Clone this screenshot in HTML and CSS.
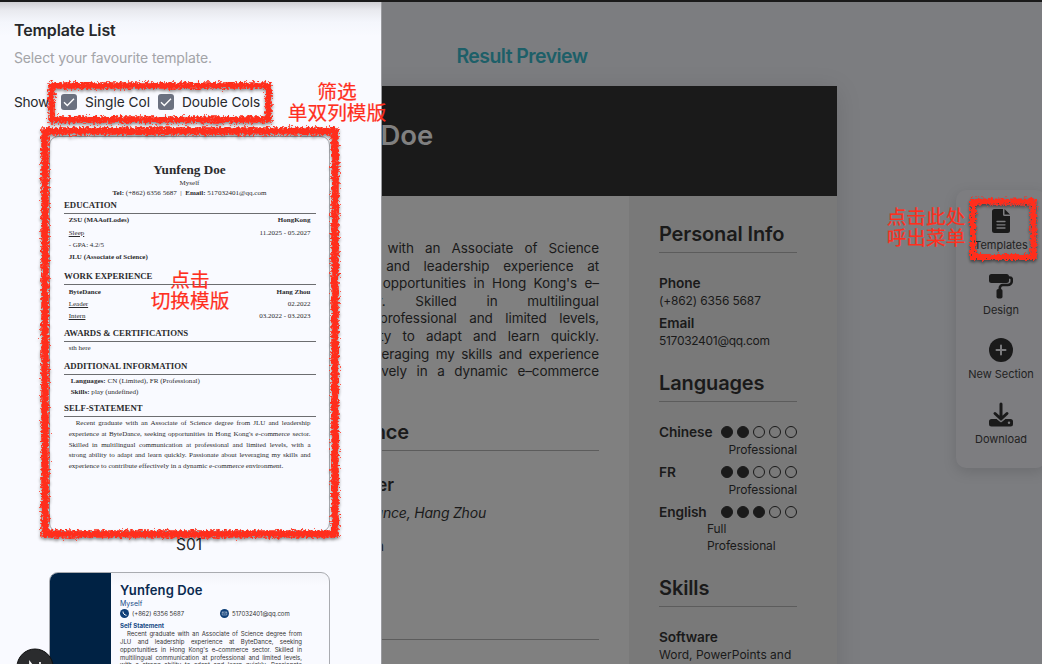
FILE: index.html
```html
<!DOCTYPE html>
<html lang="en">
<head>
<meta charset="utf-8">
<title>Resume Builder</title>
<link rel="stylesheet" href="styles.css">
</head>
<body>
<div class="app">
  <div class="workspace">
    <h1 class="preview-title">Result Preview</h1>
    <div class="sheet">
      <div class="sheet-head">Yunfeng Doe</div>
      <div class="sheet-body">
        <div class="main-col">
          <div class="para">
            <div class="indent">Recent graduate with an Associate of Science</div>
            <div>degree from JLU and leadership experience at</div>
            <div>ByteDance, seeking opportunities in Hong Kong's e–</div>
            <div>commerce sector. Skilled in multilingual</div>
            <div>communication at professional and limited levels,</div>
            <div>with a strong ability to adapt and learn quickly.</div>
            <div>Passionate about leveraging my skills and experience</div>
            <div>to contribute effectively in a dynamic e–commerce</div>
            <div class="last">environment.</div>
          </div>
          <h2 class="exp"><span>Work Experience</span></h2>
          <h3><span>Leader</span></h3>
          <p class="place"><span>ByteDance, Hang Zhou</span></p>
          <p class="role"><span>Intern</span></p>
          <h2 class="edu">Education</h2>
        </div>
        <div class="side-col">
          <h2>Personal Info</h2>
          <div class="item"><b>Phone</b><p class="v-phone">(+862) 6356 5687</p></div>
          <div class="item"><b>Email</b><p class="v-mail">517032401@qq.com</p></div>
          <h2>Languages</h2>
          <div class="item"><div class="lang"><b>Chinese</b><span class="dots"><i class="on"></i><i class="on"></i><i></i><i></i><i></i></span></div><p class="level">Professional</p></div>
          <div class="item"><div class="lang"><b>FR</b><span class="dots"><i class="on"></i><i class="on"></i><i></i><i></i><i></i></span></div><p class="level">Professional</p></div>
          <div class="item"><div class="lang"><b>English</b><span class="dots"><i class="on"></i><i class="on"></i><i class="on"></i><i></i><i></i></span></div><p class="level full">Full<br>Professional</p></div>
          <h2 class="skills">Skills</h2>
          <div class="item"><b>Software</b><p>Word, PowerPoints and</p></div>
        </div>
      </div>
    </div>
  </div>

  <nav class="tools">
    <div class="tool">
      <svg width="24" height="26" viewBox="0 0 24 26"><path fill="#1a1a1a" d="M5.500 1H14v5.500A1.500 1.500 0 0 0 15.500 8H21v14.500a2.500 2.500 0 0 1-2.500 2.500h-13A2.500 2.500 0 0 1 3 22.500v-19A2.500 2.500 0 0 1 5.500 1zM15.500 1 21 6.500h-5.500z"/><path stroke="#7b7b7d" stroke-width="1.300" stroke-linecap="round" d="M8 13.500h8M8 16.800h8M8 20h8"/></svg>
      <span>Templates</span>
    </div>
    <div class="tool">
      <svg width="24" height="26" viewBox="0 0 24 26"><rect x="0" y="1" width="20" height="9" rx="2.500" fill="#1a1a1a"/><path fill="none" stroke="#1a1a1a" stroke-width="2.600" d="M20 4.500h.8a2 2 0 0 1 2 2V8a4 4 0 0 1-4 4h-5a3 3 0 0 0-3 3v2"/><rect x="7.500" y="16" width="6" height="9.500" rx="1.800" fill="#1a1a1a"/></svg>
      <span>Design</span>
    </div>
    <div class="tool">
      <svg width="24" height="26" viewBox="0 0 24 26"><circle cx="12" cy="13" r="12" fill="#1a1a1a"/><path stroke="#7b7b7d" stroke-width="2" stroke-linecap="round" d="M12 8.500v9M7.500 13h9"/></svg>
      <span>New Section</span>
    </div>
    <div class="tool">
      <svg width="24" height="26" viewBox="0 0 24 26"><path fill="#1a1a1a" d="M2.500 17h5.700L12 20.500 15.800 17h5.700a2.500 2.500 0 0 1 2.500 2.500V22a2.500 2.500 0 0 1-2.500 2.500h-19A2.500 2.500 0 0 1 0 22v-2.500A2.500 2.500 0 0 1 2.500 17z"/><path fill="none" stroke="#7b7b7d" stroke-width="5" stroke-linecap="round" stroke-linejoin="round" d="M8.500 14.500 12 17.200l3.500-2.700"/><path fill="none" stroke="#1a1a1a" stroke-width="3" stroke-linecap="round" stroke-linejoin="round" d="M12 2v15M6 11.500l6 5.500 6-5.500"/><circle cx="20" cy="20.700" r="1.200" fill="#7b7b7d"/></svg>
      <span>Download</span>
    </div>
  </nav>

  <aside class="drawer">
    <h2 class="d-title">Template List</h2>
    <p class="d-sub">Select your favourite template.</p>
    <div class="filters">
      <span class="f-show">Show</span>
      <span class="check"><svg width="16" height="16" viewBox="0 0 16 16"><path d="M3 8.300 6.300 11.500 13 4.800" fill="none" stroke="#fff" stroke-width="1.300"/></svg></span>
      <span class="f-single">Single Col</span>
      <span class="check"><svg width="16" height="16" viewBox="0 0 16 16"><path d="M3 8.300 6.300 11.500 13 4.800" fill="none" stroke="#fff" stroke-width="1.300"/></svg></span>
      <span class="f-double">Double Cols</span>
    </div>
    <div class="card one">
      <div class="c-name">Yunfeng Doe</div>
      <div class="c-role">Myself</div>
      <div class="c-contact"><b>Tel:</b> (+862) 6356 5687 &nbsp;|&nbsp; <b>Email:</b> 517032401@qq.com</div>
      <h4 class="first">EDUCATION</h4>
      <div class="row"><b>ZSU (MAAofLodes)</b><b>HongKong</b></div>
      <div class="row"><u>Sleep</u><span>11.2025 - 05.2027</span></div>
      <div class="row"><span>- GPA: 4.2/5</span></div>
      <div class="row"><b>JLU (Associate of Science)</b></div>
      <h4>WORK EXPERIENCE</h4>
      <div class="row"><b>ByteDance</b><b>Hang Zhou</b></div>
      <div class="row"><u>Leader</u><span>02.2022</span></div>
      <div class="row"><u>Intern</u><span>03.2022 - 03.2023</span></div>
      <h4 class="awards">AWARDS &amp; CERTIFICATIONS</h4>
      <div class="row"><span>sth here</span></div>
      <h4 class="addl">ADDITIONAL INFORMATION</h4>
      <div class="tight"><b>Languages:</b> CN (Limited), FR (Professional)</div>
      <div class="tight"><b>Skills:</b> play (undefined)</div>
      <h4 class="self">SELF-STATEMENT</h4>
      <div class="stmt">
        <div class="ind">Recent graduate with an Associate of Science degree from JLU and leadership</div>
        <div>experience at ByteDance, seeking opportunities in Hong Kong's e-commerce sector.</div>
        <div>Skilled in multilingual communication at professional and limited levels, with a</div>
        <div>strong ability to adapt and learn quickly. Passionate about leveraging my skills and</div>
        <div class="last">experience to contribute effectively in a dynamic e-commerce environment.</div>
      </div>
    </div>
    <div class="c-label">S01</div>
    <div class="card two">
      <div class="navy"></div>
      <div class="two-body">
        <div class="t-name">Yunfeng Doe</div>
        <div class="t-role">Myself</div>
        <div class="t-contact">
          <svg width="9" height="9" viewBox="0 0 9 9"><circle cx="4.500" cy="4.500" r="4.500" fill="#0f3f78"/><path d="M3 2.500c0 2 1.500 3.700 3.500 3.800" fill="none" stroke="#fff" stroke-width="1"/></svg>
          <span class="t-tel">(+862) 6356 5687</span>
          <svg width="9" height="9" viewBox="0 0 9 9"><circle cx="4.500" cy="4.500" r="4.500" fill="#0f3f78"/><path d="M2.200 3h4.600v3H2.200zl2.300 1.800L6.800 3" fill="none" stroke="#b9c8dc" stroke-width=".6"/></svg>
          <span class="t-mail">517032401@qq.com</span>
        </div>
        <div class="t-head">Self Statement</div>
        <div class="t-text">
          <div class="ind">Recent graduate with an Associate of Science degree from</div>
          <div>JLU and leadership experience at ByteDance, seeking</div>
          <div>opportunities in Hong Kong's e–commerce sector. Skilled in</div>
          <div>multilingual communication at professional and limited levels,</div>
          <div>with a strong ability to adapt and learn quickly. Passionate</div>
        </div>
      </div>
    </div>
  </aside>

  <svg class="badge" width="38" height="38" viewBox="0 0 38 38"><circle cx="19" cy="19" r="18" fill="#2b2c2e" stroke="#111" stroke-width="1"/><path d="M14 25V14.500L24 28M24 14v9" fill="none" stroke="#fff" stroke-width="1.700"/></svg>
  <div class="topbar"></div>

  <svg class="marks" width="1042" height="664" viewBox="0 0 1042 664">
    <defs>
      <filter id="crayon" filterUnits="userSpaceOnUse" x="0" y="0" width="1042" height="664">
        <feTurbulence type="fractalNoise" baseFrequency=".45" numOctaves="2" seed="4" result="n"/>
        <feDisplacementMap in="SourceGraphic" in2="n" scale="8" xChannelSelector="R" yChannelSelector="G" result="d"/>
        <feDropShadow in="d" dx="0" dy="2" stdDeviation="1.800" flood-color="#000" flood-opacity=".45"/>
      </filter>
    </defs>
    <g fill="none" stroke="#ff2f1e" filter="url(#crayon)">
      <rect x="51.500" y="85.500" width="217" height="34" stroke-width="6.500"/>
      <rect x="45" y="131" width="290" height="403" stroke-width="7.500"/>
      <rect x="973" y="201.500" width="60.500" height="55.500" stroke-width="6"/>
    </g>
  </svg>
  <div class="note n1">筛选<br>单双列模版</div>
  <div class="note n2">点击<br>切换模版</div>
  <div class="note n3">点击此处<br>呼出菜单</div>
</div>
</body>
</html>
```
FILE: styles.css
```css
* { box-sizing: border-box; margin: 0; padding: 0; }
body { width: 1042px; height: 664px; overflow: hidden; font-family: Inter, "Liberation Sans", sans-serif; }
.app { position: relative; width: 1042px; height: 664px; overflow: hidden; background: #7c7d80; color: #1a1a1a; }
.topbar { position: absolute; left: 0; top: 0; width: 1042px; height: 2px; background: #1a1a1a; }

.workspace { display: flex; flex-direction: column; width: 630px; margin-left: 207px; padding-top: 42px; }
.preview-title { height: 44px; line-height: 28px; text-align: center; font-size: 19.500px; font-weight: 600; letter-spacing: -.57px; color: #1d5f68; }
.sheet { height: 640px; background: #808080; box-shadow: 0 4px 24px rgba(0,0,0,.12); }
.sheet-head { height: 110px; line-height: 98px; padding-left: 54px; background: #1a1a1a; color: #808080; font-size: 27.500px; font-weight: 600; }
.sheet-body { display: flex; height: 530px; }
.main-col { width: 422px; padding: 44px 30px 0; }
.side-col { flex: 1; padding: 20px 40px 0 30px; background: #797979; }
h2 { height: 37px; line-height: 36px; font-size: 20px; font-weight: 600; letter-spacing: -.13px; border-bottom: 1px solid #5c5c5c; }
.para { font-size: 13.500px; line-height: 17.600px; letter-spacing: -.08px; white-space: nowrap; }
.para div { padding-left: 9px; text-align: justify; text-align-last: justify; }
.para .indent { padding-left: 28px; }
.para .last { text-align-last: left; }
.exp { margin-top: 16px; }
.main-col h2 span, .main-col h3 span, .main-col p span { display: block; text-align: right; }
.exp span { width: 172px; }
.main-col h3 { margin-top: 24px; height: 20px; line-height: 20px; font-size: 17px; font-weight: 600; }
.main-col h3 span { width: 157px; }
.place { margin-top: 9px; height: 18px; line-height: 18px; font-size: 14px; font-style: italic; letter-spacing: -.2px; }
.place span { width: 249px; }
.role { margin-top: 15px; height: 18px; line-height: 18px; font-size: 14px; }
.role span { width: 147px; }
.edu { margin-top: 48px; }

.side-col .item { margin-bottom: 5px; font-size: 12px; line-height: 17px; }
.side-col h2 + .item { margin-top: 21px; }
.side-col .item + h2 { margin-top: 16px; }
.side-col .item + .skills { margin-top: 15px; }
.side-col b { display: block; font-size: 13.700px; font-weight: 600; line-height: 18px; letter-spacing: -.1px; }
.v-phone { letter-spacing: -.15px; }
.v-mail { letter-spacing: -.3px; }
.level { text-align: right; letter-spacing: -.1px; }
.level.full { margin-left: 48px; line-height: 16.500px; text-align: left; }
.side-col .item + .skills { margin-top: 16px; }
.lang { display: flex; justify-content: space-between; align-items: center; height: 18px; }
.dots { display: flex; gap: 4px; }
.dots i { width: 12px; height: 12px; border: 1px solid #1a1a1a; border-radius: 50%; }
.dots .on { background: #1a1a1a; }

.tools { position: absolute; left: 956px; top: 190px; width: 90px; height: 278px; padding-top: 18px; display: flex; flex-direction: column; align-items: center; border-radius: 10px; background: #7d7d80; box-shadow: 0 4px 14px rgba(0,0,0,.13); }
.tool { height: 64.700px; display: flex; flex-direction: column; align-items: center; font-size: 11px; line-height: 16px; color: #222; white-space: nowrap; }
.tool span { margin-top: 3px; }

.drawer { position: absolute; left: 0; top: 2px; width: 382px; height: 662px; padding: 16px 14px 0; background: linear-gradient(#cfcfd3, #e8e9ee 8px, #f4f6fc 20px, #f9faff 34px); border-right: 1px solid #9a9b9f; }
.d-title { height: 24px; line-height: 24px; border: 0; font-size: 16px; font-weight: 600; letter-spacing: -.12px; color: #27282b; }
.d-sub { margin-top: 5px; height: 22px; line-height: 22px; font-size: 14px; letter-spacing: -.14px; color: #a3a4a8; }
.filters { display: flex; align-items: center; height: 20px; margin-top: 23px; font-size: 13.700px; letter-spacing: -.02px; color: #27282b; white-space: nowrap; }
.f-show { width: 47px; letter-spacing: -.3px; }
.check { width: 16px; height: 16px; margin-right: 8px; border-radius: 3px; background: #6b7180; }
.check svg { display: block; }
.f-single { width: 73px; }
.card { width: 281px; margin-left: 35px; border: 1px solid #a9abb0; border-radius: 9px; overflow: hidden; }
.card.one { height: 396px; margin-top: 24px; padding: 24px 13px 0 14px; font: 7px/12.400px "Liberation Serif", serif; color: #2b2b2d; white-space: nowrap; }
.c-name { height: 18px; text-align: center; font-size: 13.200px; line-height: 18px; font-weight: 700; margin-left: -1px; }
.c-role { text-align: center; height: 9px; line-height: 9px; margin-left: -1px; }
.c-contact { height: 10px; line-height: 11px; text-align: center; margin-left: -1px; font-size: 7.050px; }
.card h4 { height: 16px; margin-top: 6px; line-height: 15px; font-size: 8.780px; border-bottom: 1px solid #6c6d70; margin-bottom: .3px; }
.card h4.first { margin-top: 0; }
.row { display: flex; justify-content: space-between; padding: 0 5.500px 0 4.700px; height: 12.300px; }
.card h4.awards { margin-top: 3.400px; }
.card h4.addl { margin-top: 4px; }
.tight { padding-left: 6.700px; height: 10.600px; font-size: 7.080px; }
.card h4.self { margin-top: 5px; }
.stmt { padding: 0 5.500px 0 4.700px; line-height: 10.600px; padding-top: 1px; }
.stmt div, .t-text div { text-align: justify; text-align-last: justify; }
.stmt .ind { padding-left: 7px; }
.stmt .last { text-align-last: left; font-size: 7.080px; }
.c-label { height: 40px; padding-top: 1px; margin-left: -3px; line-height: 24px; text-align: center; font-size: 15.500px; color: #27282b; }
.card.two { display: flex; height: 396px; background: linear-gradient(#f3f4f9, #f9faff 12px); }
.navy { width: 61px; background: #002244; }
.two-body { width: 191px; padding: 9px 0 0 9px; font-size: 6px; color: #333; white-space: nowrap; }
.t-name { height: 17px; line-height: 17px; font-size: 13px; font-weight: 600; letter-spacing: .1px; color: #0a2a50; }
.t-role { height: 9px; line-height: 9px; font-size: 7px; color: #174a86; }
.t-contact { display: flex; align-items: center; height: 10px; }
.t-contact span { margin-left: 3px; }
.t-tel { width: 88px; }
.t-head { margin-top: 3px; height: 9px; line-height: 9px; font-size: 6.100px; font-weight: 700; color: #174a86; }
.t-text { line-height: 7.850px; width: 182px; }
.t-text .ind { padding-left: 7px; }

.badge { position: absolute; left: 16px; top: 648px; }
.marks { position: absolute; left: 0; top: 0; }
.note { position: absolute; width: 120px; text-align: center; font: 400 19.700px/21px "Noto Sans CJK SC", sans-serif; color: #ff2f1e; -webkit-text-stroke: .2px #ff2f1e; }
.n1 { left: 277px; top: 80px; }
.n2 { left: 130px; top: 268px; }
.n3 { left: 866px; top: 205px; }
```
